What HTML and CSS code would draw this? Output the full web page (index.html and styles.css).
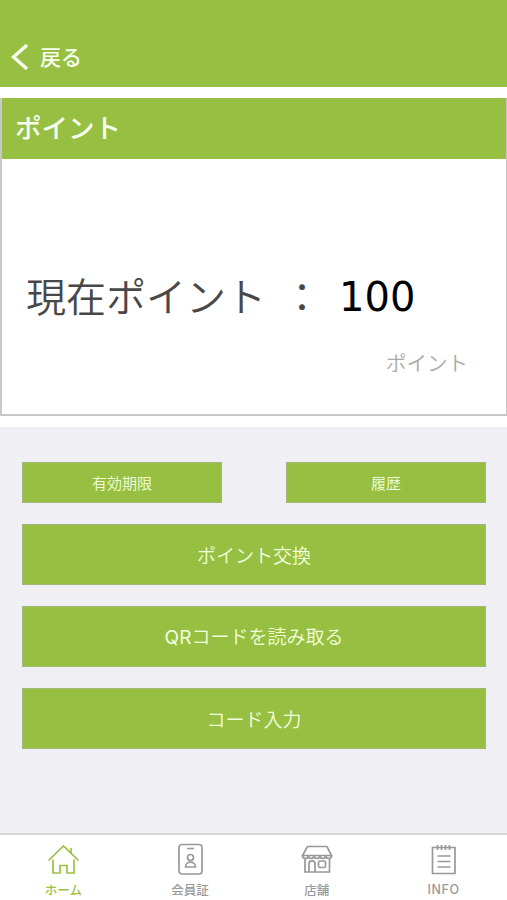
FILE: index.html
```html
<!DOCTYPE html>
<html lang="ja">
<head>
<meta charset="utf-8">
<title>ポイント</title>
<link rel="stylesheet" href="styles.css">
</head>
<body>
<div class="app">
  <header class="header">
    <svg class="back-icon" viewBox="0 0 18 28"><path d="M16 2 2.500 14 16 26"/></svg>
    <span class="back-label">戻る</span>
  </header>
  <main class="main">
    <section class="card-area">
      <div class="card">
        <h1 class="card-title">ポイント</h1>
        <div class="card-body">
          <div class="balance">
            <span class="balance-label">現在ポイント</span>
            <span class="balance-colon">：</span>
            <span class="balance-value">100</span>
          </div>
          <div class="unit">ポイント</div>
        </div>
      </div>
    </section>
    <section class="actions">
      <div class="action-row">
        <button class="btn btn-small">有効期限</button>
        <button class="btn btn-small">履歴</button>
      </div>
      <button class="btn">ポイント交換</button>
      <button class="btn"><span class="latin">QR</span>コードを読み取る</button>
      <button class="btn">コード入力</button>
    </section>
  </main>
  <nav class="tabs">
    <a class="tab tab-active">
      <svg class="tab-icon" viewBox="0 0 34 34"><path d="M2.500 18.500 17.500 4l15 14.500M25 11V6M7 17.500v13.500h7v-7.500h7V31h7V17.500"/></svg>
      <span>ホーム</span>
    </a>
    <a class="tab">
      <svg class="tab-icon" viewBox="0 0 34 34"><rect x="6" y="2.500" width="23" height="29.500" rx="3"/><path d="M14 6.500h7M12.500 25c0-6.500 10-6.500 10 0z"/><circle cx="17.500" cy="15.500" r="3"/></svg>
      <span>会員証</span>
    </a>
    <a class="tab">
      <svg class="tab-icon" viewBox="0 0 34 34"><path d="M7.500 4.500h19.500l4.500 9h-29zM2.500 13.500c0 4 5.800 4 5.800 0 0 4 5.800 4 5.800 0 0 4 5.800 4 5.800 0 0 4 5.800 4 5.800 0 0 4 5.800 4 5.800 0M5 16.500V30h24.500V16.500M9 30v-8.500c0-3.500 6-3.500 6 0V30"/><rect x="18.500" y="19" width="7" height="6.500" rx="1.500"/></svg>
      <span>店舗</span>
    </a>
    <a class="tab">
      <svg class="tab-icon" viewBox="0 0 34 34"><path d="M5.500 5.500h22.500v26H5.500zM10.500 14h13M10.500 19.500h13M10.500 25h13M10.500 3v5M14.500 3v5M18.500 3v5M22.500 3v5"/></svg>
      <span class="tab-latin">INFO</span>
    </a>
  </nav>
</div>
</body>
</html>
```
FILE: styles.css
```css
* {
  box-sizing: border-box;
}

body {
  margin: 0;
  font-family: "Noto Sans CJK JP", sans-serif;
}

.app {
  display: flex;
  flex-direction: column;
  height: 900px;
  background: #efeff4;
}

.header {
  display: flex;
  align-items: center;
  height: 87px;
  padding: 27px 11px 0;
  background: #97c043;
  color: #f8fff0;
}

.back-icon {
  width: 18px;
  height: 28px;
  margin-right: 11px;
  fill: none;
  stroke: currentColor;
  stroke-width: 3.4;
}

.back-label {
  padding-bottom: 2px;
  font-size: 21px;
  line-height: 30px;
  font-weight: 500;
}

.main {
  flex: 1;
}

.card-area {
  height: 340px;
  padding: 11px 0 12px;
  background: #fff;
}

.card {
  height: 318px;
  border: solid #c8c8c8;
  border-width: 0 1px 2px 2px;
}

.card-title {
  height: 61px;
  margin: 0;
  padding-left: 13px;
  background: #97c043;
  color: #f8fff0;
  font-size: 26.500px;
  line-height: 58px;
  font-weight: 500;
}

.card-body {
  padding: 106px 38px 0 24px;
}

.balance {
  display: flex;
  align-items: center;
  height: 60px;
  color: #484848;
  font-size: 40px;
  line-height: 60px;
  font-weight: 350;
}

.balance-label {
  width: 256px;
}

.balance-colon {
  width: 57px;
}

.balance-value {
  padding-top: 3px;
  color: #000;
  font-family: "DejaVu Sans", sans-serif;
  font-size: 40px;
  font-weight: 400;
}

.unit {
  padding-top: 22px;
  color: #aaa;
  font-size: 20.500px;
  line-height: 30px;
  font-weight: 350;
  text-align: right;
}

.actions {
  display: flex;
  flex-direction: column;
  gap: 21px;
  padding: 35px 21px 0 22px;
}

.action-row {
  display: flex;
  justify-content: space-between;
}

.btn {
  height: 61px;
  padding: 0;
  border: 1px solid #a2b77a;
  background: #97c043;
  color: #f2ffdc;
  font-family: inherit;
  font-size: 19px;
  line-height: 28px;
  font-weight: 350;
}

.btn-small {
  width: 200px;
  height: 41px;
  font-size: 15px;
  line-height: 22px;
}

.latin {
  font-family: Inter, sans-serif;
  font-weight: 400;
}

.tabs {
  display: flex;
  height: 67px;
  border-top: 2px solid #d5d5d9;
  background: #fff;
}

.tab {
  display: flex;
  flex: 1;
  flex-direction: column;
  align-items: center;
  padding-top: 7px;
  color: #999;
  font-size: 12.500px;
  line-height: 18px;
  font-weight: 500;
}

.tab-active {
  color: #9bbf45;
}

.tab-icon {
  width: 34px;
  height: 34px;
  margin-bottom: 5px;
  fill: none;
  stroke: currentColor;
  stroke-width: 1.7;
}

.tab-latin {
  font-family: Inter, sans-serif;
  letter-spacing: 0.6px;
}
```
